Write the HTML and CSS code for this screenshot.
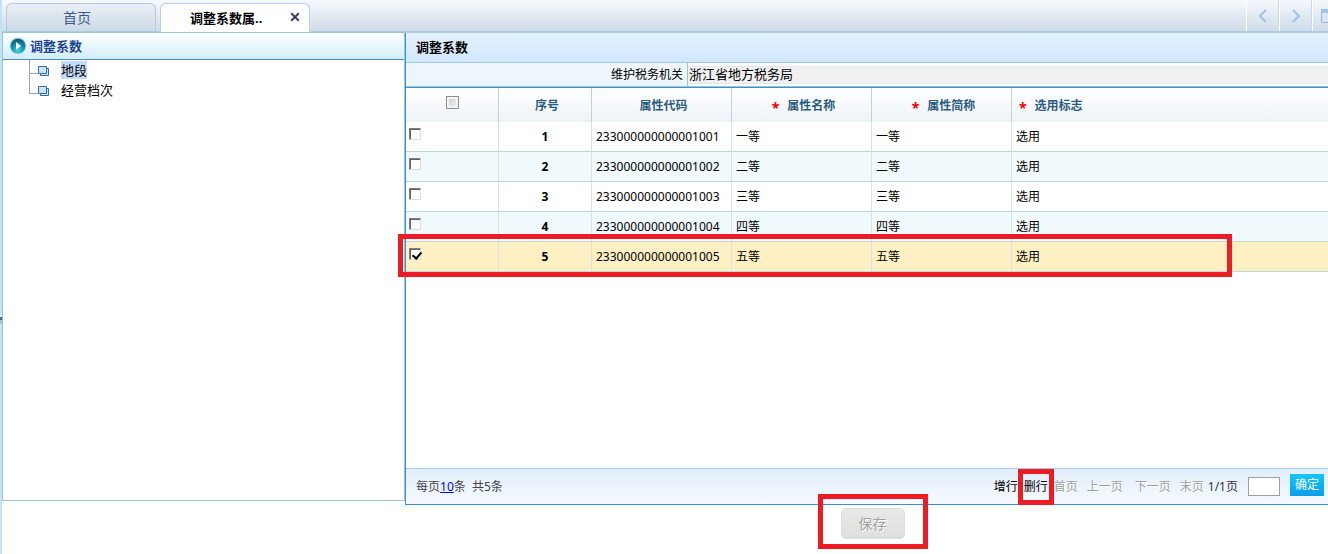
FILE: index.html
```html
<!DOCTYPE html>
<html lang="zh-CN">
<head>
<meta charset="utf-8">
<title>调整系数</title>
<link rel="stylesheet" href="styles.css">
</head>
<body>
<div class="rail"><span class="rail-grip"></span></div>
<div class="app">
  <header class="tabbar">
    <nav class="tabs">
      <button class="tab" type="button">首页</button>
      <div class="tab tab-active">
        <button class="tab-title" type="button">调整系数属..</button>
        <button class="tab-close" type="button" aria-label="关闭">
          <svg width="10" height="10" viewBox="0 0 10 10"><path d="M1.2 1.2 8.8 8.8M8.8 1.2 1.2 8.8" stroke="#3a4256" stroke-width="2" fill="none"/></svg>
        </button>
      </div>
    </nav>
    <div class="tab-tools">
      <button class="tool" type="button" aria-label="向左"><svg width="10" height="14" viewBox="0 0 10 14"><path d="M8 1 2 7l6 6" stroke="#a0c2e6" stroke-width="2" fill="none"/></svg></button>
      <button class="tool" type="button" aria-label="向右"><svg width="10" height="14" viewBox="0 0 10 14"><path d="M2 1l6 6-6 6" stroke="#a0c2e6" stroke-width="2" fill="none"/></svg></button>
      <button class="tool tool-window" type="button" aria-label="窗口"><svg width="14" height="14" viewBox="0 0 14 14"><rect x=".5" y=".5" width="13" height="13" rx="1" stroke="#8fb6de" fill="#dbe6f0"/><path d="M0 0h14v4H0z" fill="#a0c2e6"/></svg></button>
    </div>
  </header>

  <main class="main">
    <aside class="side">
      <h2 class="side-title">
        <svg width="18" height="18" viewBox="0 0 18 18">
          <defs><radialGradient id="orb" cx=".5" cy=".8" r=".8"><stop offset="0" stop-color="#3fd6e4"/><stop offset=".55" stop-color="#0d8fa8"/><stop offset="1" stop-color="#0a5673"/></radialGradient></defs>
          <circle cx="9" cy="9" r="8.5" fill="#a9cfd8"/><circle cx="9" cy="9" r="7.3" fill="url(#orb)"/><path d="M7 5l5 4-5 4z" fill="#fff"/>
        </svg>
        调整系数
      </h2>
      <ul class="tree">
        <li class="node">
          <svg class="leaf" width="11" height="10" viewBox="0 0 11 10"><path d="M2.5 2.5h8v7h-8z" fill="#cfe3f7" stroke="#2f6db5"/><path d="M.5.5h8v7h-8z" fill="#cfe3f7" stroke="#2f6db5"/></svg>
          <a class="node-link selected" href="#">地段</a>
        </li>
        <li class="node">
          <svg class="leaf" width="11" height="10" viewBox="0 0 11 10"><path d="M2.5 2.5h8v7h-8z" fill="#cfe3f7" stroke="#2f6db5"/><path d="M.5.5h8v7h-8z" fill="#cfe3f7" stroke="#2f6db5"/></svg>
          <a class="node-link" href="#">经营档次</a>
        </li>
      </ul>
    </aside>

    <section class="content">
      <div class="panel">
        <h2 class="panel-title">调整系数</h2>
        <div class="form-row">
          <label class="form-label" for="org">维护税务机关</label>
          <div class="form-field"><input class="org-input" id="org" type="text" value="浙江省地方税务局" readonly></div>
        </div>
        <div class="grid">
          <table class="table">
            <colgroup><col class="c-check"><col class="c-no"><col class="c-code"><col class="c-name"><col class="c-name"><col></colgroup>
            <thead>
              <tr>
                <th class="th-check"><input class="check check-all" type="checkbox" aria-label="全选"></th>
                <th>序号</th>
                <th>属性代码</th>
                <th><span class="req">*</span>属性名称</th>
                <th><span class="req">*</span>属性简称</th>
                <th class="th-left"><span class="req">*</span>选用标志</th>
              </tr>
            </thead>
            <tbody>
              <tr><td class="td-check"><input class="check" type="checkbox" aria-label="选择第1行"></td><td class="td-no">1</td><td>233000000000001001</td><td>一等</td><td>一等</td><td>选用</td></tr>
              <tr class="alt"><td class="td-check"><input class="check" type="checkbox" aria-label="选择第2行"></td><td class="td-no">2</td><td>233000000000001002</td><td>二等</td><td>二等</td><td>选用</td></tr>
              <tr><td class="td-check"><input class="check" type="checkbox" aria-label="选择第3行"></td><td class="td-no">3</td><td>233000000000001003</td><td>三等</td><td>三等</td><td>选用</td></tr>
              <tr class="alt"><td class="td-check"><input class="check" type="checkbox" aria-label="选择第4行"></td><td class="td-no">4</td><td>233000000000001004</td><td>四等</td><td>四等</td><td>选用</td></tr>
              <tr class="current"><td class="td-check"><input class="check" type="checkbox" checked aria-label="选择第5行"><span class="mark mark-row"></span></td><td class="td-no">5</td><td>233000000000001005</td><td>五等</td><td>五等</td><td>选用</td></tr>
            </tbody>
          </table>
        </div>
        <footer class="pager">
          <div class="pager-info">每页<a class="size-link" href="#">10</a>条&nbsp; 共5条</div>
          <div class="pager-actions">
            <button class="text-btn" type="button">增行</button>
            <button class="text-btn text-btn-delete" type="button">删行<span class="mark mark-delete"></span></button>
            <button class="text-btn" type="button" disabled>首页</button>
            <button class="text-btn prev" type="button" disabled>上一页</button>
            <button class="text-btn" type="button" disabled>下一页</button>
            <button class="text-btn last" type="button" disabled>末页</button>
            <span class="page-no">1/1页</span>
            <input class="page-input" type="text" aria-label="页码">
            <button class="go" type="button">确定</button>
          </div>
        </footer>
      </div>
      <div class="actions">
        <div class="save-wrap"><button class="save" type="button" disabled>保存</button><span class="mark mark-save"></span></div>
      </div>
    </section>
  </main>
</div>
</body>
</html>
```
FILE: styles.css
```css
* { box-sizing: border-box; }

body {
  margin: 0;
  display: flex;
  height: 100vh;
  overflow: hidden;
  background: #fff;
  color: #000;
  font: 12px/18px "Noto Sans", "Noto Sans CJK SC", sans-serif;
}

button, input { font: inherit; color: inherit; }
button { padding: 0; border: 0; background: none; }
h2, ul { margin: 0; padding: 0; }
svg { display: block; flex: none; }

.rail { flex: 0 0 2px; background: #c3e0fc; display: flex; align-items: center; }
.rail-grip { width: 2px; height: 9px; margin-top: 84px; background: linear-gradient(#fff 2px, #2f6db5 2px, #2f6db5 5px, #9cc 5px); }
.app { flex: 1; min-width: 0; display: flex; flex-direction: column; }

.tabbar {
  display: flex;
  justify-content: space-between;
  height: 33px;
  border-bottom: 2px solid #a9cbe8;
  background: linear-gradient(#f6fafd, #d0dce8);
}
.tabs { display: flex; gap: 4px; padding: 3px 0 0 4px; }
.tab {
  width: 150px;
  border: 1px solid #b8c8da;
  border-bottom: 0;
  border-radius: 6px 6px 0 0;
  background: linear-gradient(#e9eff6, #ccdae6);
  color: #3a5a86;
  font-size: 14px;
  padding-right: 8px;
}
.tab-active {
  display: flex;
  align-items: center;
  justify-content: flex-end;
  gap: 18px;
  height: 30px;
  padding: 0 9px 2px 0;
  border-color: #b5cfec;
  background: #fff;
  color: #000;
  font-size: 13px;
}
.tab-title { width: 82px; font-weight: bold; text-align: left; }
.tab-close { padding-bottom: 2px; }

.tab-tools { display: flex; width: 82px; overflow: hidden; }
.tool {
  flex: 0 0 33px;
  display: flex;
  align-items: center;
  justify-content: center;
  border-left: 1px solid #fff;
  border-right: 1px solid #c8d9ea;
  background: linear-gradient(#f4f8fc, #cfdce8);
}
.tool-window { justify-content: flex-start; padding-left: 8px; }

.main { flex: 1; min-height: 0; display: flex; }

.side {
  flex: 0 0 403px;
  margin: -1px 0 53px;
  border: 1px solid #9cc8c4;
  background: #fff;
}
.side-title {
  display: flex;
  align-items: center;
  gap: 3px;
  height: 27px;
  padding-left: 6px;
  border-bottom: 1px solid #4a90b8;
  background: linear-gradient(#fff, #d3edfb);
  color: #1b4590;
  font-size: 13px;
}
.tree { list-style: none; padding-left: 26px; font-size: 13px; }
.node { display: flex; align-items: center; height: 20px; position: relative; }
.node::before { content: ""; width: 9px; height: 1px; margin-top: 6px; background: #9aa7b8; }
.node::after { content: ""; position: absolute; left: 0; top: 0; width: 1px; height: 13px; background: #9aa7b8; }
.node:first-child::after { height: 20px; }
.leaf { margin-top: 2px; }
.node-link { margin-left: 12px; line-height: 18px; color: #000; text-decoration: none; }
.selected { background: #c2dcfb; }

.content { flex: 1; min-width: 0; display: flex; flex-direction: column; }
.panel {
  flex: 1;
  min-height: 0;
  display: flex;
  flex-direction: column;
  border-left: 1px solid #3d8fd3;
  border-bottom: 1px solid #3d8fd3;
}
.panel-title {
  height: 30px;
  padding: 5px 0 0 10px;
  border-bottom: 1px solid #9cc8e0;
  background: linear-gradient(#e6f2ff, #d0e7fe);
  font-size: 13px;
}
.form-row { display: flex; height: 24px; border-bottom: 1px solid #9cc8c4; }
.form-label {
  flex: 0 0 282px;
  padding: 3px 4px 0 0;
  border-right: 1px solid #9cc8c4;
  background: #eef5fd;
  text-align: right;
}
.form-field { flex: 1; display: flex; padding: 3px 0; }
.org-input {
  flex: 1;
  min-width: 0;
  height: 18px;
  padding: 0 1px 2px;
  border: 1px solid #dce9f0;
  border-width: 1px 0;
  background: #f0f0f0;
  font-size: 13px;
}

.grid { flex: 1; min-height: 0; border-top: 1px solid #3d8fd3; }
.table { width: 100%; table-layout: fixed; border-collapse: separate; border-spacing: 0; }
.c-check, .c-no { width: 93px; }
.c-code, .c-name { width: 140px; }
th {
  height: 34px;
  padding: 2px 0 0 4px;
  border-right: 1px solid #bcd6d6;
  background: linear-gradient(#fff, #eef3f8);
  color: #2c5d80;
}
.th-check { padding: 0; }
.th-left { text-align: left; padding-left: 7px; }
.req { margin-right: 8px; color: #f00; font-size: 14px; vertical-align: -3px; line-height: 14px; }
td {
  height: 30px;
  padding: 0 4px;
  border-right: 1px solid #d5e3e3;
  border-bottom: 1px solid #bcd8d8;
}
th:last-child, td:last-child { border-right: 0; }
.alt td { background: #f0fafd; }
.current td { background: #fff0c4; }
.td-no { text-align: center; font-weight: bold; }
.td-check { position: relative; padding: 0 3px; vertical-align: top; }
.check {
  appearance: none;
  display: block;
  width: 12px;
  height: 12px;
  margin: 6px 0 0;
  border: 1px solid #ddd;
  border-top-color: #808080;
  border-left-color: #808080;
  background: #fff;
  box-shadow: inset 1px 1px #606060;
}
.check:checked::after {
  content: "";
  display: block;
  width: 4px;
  height: 7px;
  margin: 1px 0 0 4px;
  border: solid #000;
  border-width: 0 2px 2px 0;
  transform: rotate(40deg);
}
.check-all {
  width: 13px;
  height: 13px;
  margin: 0 auto 6px;
  border: 1px solid #8e8f8f;
  background: linear-gradient(135deg, #c8ccd2, #f4f4f4);
  box-shadow: inset 0 0 0 2px #f4f4f4;
}

.pager {
  display: flex;
  align-items: center;
  justify-content: space-between;
  height: 36px;
  padding: 0 4px 0 10px;
  border-top: 1px solid #a9cbea;
  background: linear-gradient(#e2eefb, #f5faff);
  color: #444;
}
.size-link { color: #00f; }
.pager-actions { display: flex; align-items: center; }
.text-btn { color: #000; }
.text-btn:disabled { color: #a0a0a0; text-shadow: 1px 1px #fff; }
.text-btn-delete { position: relative; margin: 0 6px; }
.prev { margin: 0 12px 0 9px; }
.last { margin: 0 4px 0 9px; }
.page-no { color: #333; }
.page-input { width: 32px; height: 19px; margin: 0 10px; border: 1px solid #a0a0a0; background: #fff; }
.go { width: 34px; height: 22px; margin-bottom: 4px; background: linear-gradient(#12c8fa, #0a9eea); color: #fff; }

.actions { display: flex; justify-content: center; height: 49px; padding: 3px 0 0 12px; }
.save-wrap { position: relative; height: 31px; }
.save {
  width: 64px;
  height: 31px;
  border: 1px solid #dcdcdc;
  border-radius: 5px;
  background: linear-gradient(#e9e9e9, #dfdfdf);
  color: #a0a0a0;
  font-size: 14px;
  text-shadow: 1px 1px #fff;
}

.mark { position: absolute; z-index: 2; border: 5px solid #ed1c24; pointer-events: none; }
.mark-row { left: -8px; top: -8px; width: 834px; height: 43px; }
.mark-delete { left: -6px; top: -9px; width: 36px; height: 36px; }
.mark-save { left: -23px; top: -14px; width: 110px; height: 55px; }
```
